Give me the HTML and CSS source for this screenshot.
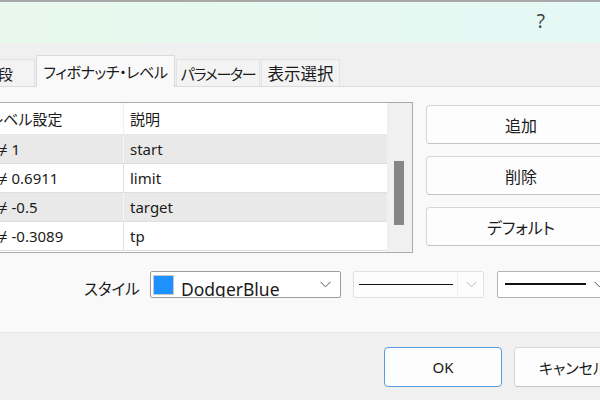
FILE: index.html
```html
<!DOCTYPE html>
<html lang="ja">
<head>
<meta charset="utf-8">
<title>フィボナッチ・レベル</title>
<link rel="stylesheet" href="styles.css">
</head>
<body>
<div class="topstrip"></div>
<div class="titlebar"><span class="help">?</span></div>
<div class="dialog">
  <div class="tabs">
    <div class="tab first">段</div>
    <div class="tab active tab-fib">フィボナッチ・レベル</div>
    <div class="tab tab-param">パラメーター</div>
    <div class="tab tab-view">表示選択</div>
  </div>
  <div class="panel">
    <div class="levels">
      <div class="grid">
        <div class="row head"><div class="c1 hc1">レベル設定</div><div class="c2">説明</div></div>
        <div class="row alt"><div class="c1">≠ 1</div><div class="c2">start</div></div>
        <div class="row"><div class="c1">≠ 0.6911</div><div class="c2">limit</div></div>
        <div class="row alt"><div class="c1">≠ -0.5</div><div class="c2">target</div></div>
        <div class="row"><div class="c1">≠ -0.3089</div><div class="c2">tp</div></div>
      </div>
      <div class="scrollbar"><div class="thumb"></div></div>
    </div>
    <div class="actions">
      <button class="btn side">追加</button>
      <button class="btn side">削除</button>
      <button class="btn side">デフォルト</button>
    </div>
    <div class="style-row">
      <span class="label">スタイル</span>
      <div class="combo color">
        <span class="swatch"></span><span class="ctext">DodgerBlue</span>
        <svg class="chev" width="11" height="7" viewBox="0 0 11 7"><path d="M0.5 0.8 L5.5 5.8 L10.5 0.8" fill="none" stroke="#555" stroke-width="1"/></svg>
      </div>
      <div class="combo linestyle disabled">
        <span class="line thin"></span>
        <span class="drop"><svg class="chev" width="11" height="7" viewBox="0 0 11 7"><path d="M0.5 0.8 L5.5 5.8 L10.5 0.8" fill="none" stroke="#bbb" stroke-width="1"/></svg></span>
      </div>
      <div class="combo linestyle wide">
        <span class="line thick"></span>
        <span class="drop"><svg class="chev" width="11" height="7" viewBox="0 0 11 7"><path d="M0.5 0.8 L5.5 5.8 L10.5 0.8" fill="none" stroke="#555" stroke-width="1"/></svg></span>
      </div>
    </div>
  </div>
  <div class="footer">
    <button class="btn foot ok">OK</button>
    <button class="btn foot">キャンセル</button>
  </div>
</div>
</body>
</html>
```
FILE: styles.css
```css
html, body {
  margin: 0;
  padding: 0;
}
body {
  width: 600px;
  height: 400px;
  overflow: hidden;
  background: #f0f0f0;
  font-family: "Noto Sans", "Noto Sans CJK JP", sans-serif;
  font-feature-settings: "palt";
  color: #1b1b1b;
  font-size: 15px;
}
.topstrip {
  height: 2px;
  background: #a9a9a9;
}
.titlebar {
  height: 41px;
  background: linear-gradient(90deg, #e8f8ec 0%, #e6f8f1 60%, #e4f8f5 100%);
  display: flex;
  align-items: center;
  justify-content: flex-end;
  padding-right: 55px;
}
.help {
  font-size: 19px;
  color: #444;
  line-height: 1;
  margin-top: -2px;
}
.dialog {
  width: 680px;
  margin-left: -20px;
}
.tabs {
  display: flex;
  align-items: flex-end;
  gap: 1px;
  height: 44px;
  box-sizing: border-box;
  padding-top: 13px;
  border-bottom: 1px solid #dcdcdc;
}
.tab {
  height: 27px;
  box-sizing: border-box;
  padding: 0;
  display: flex;
  align-items: center;
  justify-content: center;
  background: #f3f3f3;
  border: 1px solid #e2e2e2;
  border-bottom: none;
  font-size: 15px;
  white-space: nowrap;
  flex: none;
}
.tab.first {
  justify-content: flex-start;
  padding-left: 17px;
  width: 55px;
}
.tab.active {
  background: #f9f9f9;
  border-color: #dadada;
  margin-bottom: -1px;
  height: 32px;
}
.tab-fib {
  width: 139px;
  letter-spacing: -0.4px;
}
.tab-param {
  width: 84px;
  letter-spacing: -1.3px;
}
.tab-view {
  width: 79px;
  font-size: 16.5px;
}
.panel {
  background: #f9f9f9;
  height: 246px;
  box-sizing: border-box;
  padding-top: 15px;
  display: grid;
  grid-template-columns: 433px 190px;
  column-gap: 13px;
  align-content: start;
  border-bottom: 1px solid #e6e6e6;
}
.levels {
  display: flex;
  height: 151px;
  box-sizing: border-box;
  border: 1px solid #ababab;
  background: #fff;
}
.grid {
  flex: 1;
  overflow: hidden;
}
.row {
  display: grid;
  grid-template-columns: 143px 1fr;
  height: 29px;
  box-sizing: border-box;
  border-bottom: 1px solid #dedede;
  background: #fff;
}
.row.head {
  height: 32px;
  border-bottom-color: #e8e8e8;
}
.row.alt {
  background: #e9e9e9;
}
.c1, .c2 {
  display: flex;
  align-items: center;
  white-space: nowrap;
  overflow: hidden;
}
.c1 {
  padding-left: 18px;
  border-right: 1px solid #e0e0e0;
}
.row.head .c1 {
  border-right-color: #f0f0f0;
}
.row.alt .c1 {
  border-right-color: #f6f6f6;
}
.hc1 {
  padding-left: 9px;
}
.c2 {
  padding-left: 6px;
}
.scrollbar {
  width: 25px;
  background: #f0f0f0;
  padding-top: 58px;
  padding-left: 7px;
  box-sizing: border-box;
}
.thumb {
  width: 10px;
  height: 64px;
  background: #858585;
}
.actions {
  display: flex;
  flex-direction: column;
  gap: 12px;
  padding-top: 3px;
}
.btn {
  font-family: "Noto Sans", "Noto Sans CJK JP", sans-serif;
  font-feature-settings: "palt";
  color: #1b1b1b;
  background: #fdfdfd;
  border: 1px solid #d6d6d6;
  border-bottom-color: #c4c4c4;
  border-radius: 4px;
  padding: 0;
}
.btn.side {
  height: 39px;
  font-size: 16px;
}
.style-row {
  grid-column: 1 / 3;
  display: flex;
  align-items: center;
  margin-top: 16px;
  padding-left: 104px;
}
.label {
  font-size: 15.5px;
  white-space: nowrap;
  margin-right: 13px;
  margin-top: 8px;
  width: 53px;
  flex: none;
}
.combo {
  height: 27px;
  box-sizing: border-box;
  border: 1px solid #9c9c9c;
  border-radius: 2px;
  background: #fff;
  display: flex;
  align-items: center;
  overflow: hidden;
  flex: none;
}
.combo.color {
  width: 191px;
  padding-left: 2px;
  padding-right: 9px;
}
.swatch {
  width: 21px;
  height: 20px;
  background: #1e90ff;
  border: 1px solid #c8c8c8;
  box-sizing: border-box;
  flex: none;
}
.ctext {
  font-size: 17.5px;
  margin-left: 7px;
  flex: 1;
  align-self: stretch;
  padding-top: 7px;
  line-height: 20px;
  white-space: nowrap;
}
.chev {
  display: block;
  flex: none;
}
.combo.linestyle {
  margin-left: 12px;
  width: 131px;
  padding-left: 5px;
}
.combo.wide {
  margin-left: 13px;
  border-color: #b3b3b3;
  padding-left: 7px;
  width: 150px;
}
.combo.disabled {
  border-color: #e0e0e0;
  background: #fdfdfd;
}
.line {
  display: block;
  flex: none;
  background: #111;
}
.line.thin {
  width: 94px;
  height: 1px;
  margin-top: -1px;
}
.line.thick {
  width: 81px;
  height: 2px;
  margin-top: -2px;
}
.drop {
  display: flex;
  align-items: center;
  justify-content: center;
  height: 100%;
  width: 27px;
  margin-left: 4px;
  border-left: 1px solid #f2f2f2;
  flex: none;
}
.combo.wide .drop {
  margin-left: 0;
  border-left: none;
}
.footer {
  height: 67px;
  box-sizing: border-box;
  padding-top: 14px;
  padding-left: 404px;
  display: flex;
  gap: 12px;
  align-items: flex-start;
}
.btn.foot {
  width: 118px;
  height: 40px;
  font-size: 15px;
  flex: none;
}
.btn.ok {
  border: 1px solid #5a9ddf;
}
```
